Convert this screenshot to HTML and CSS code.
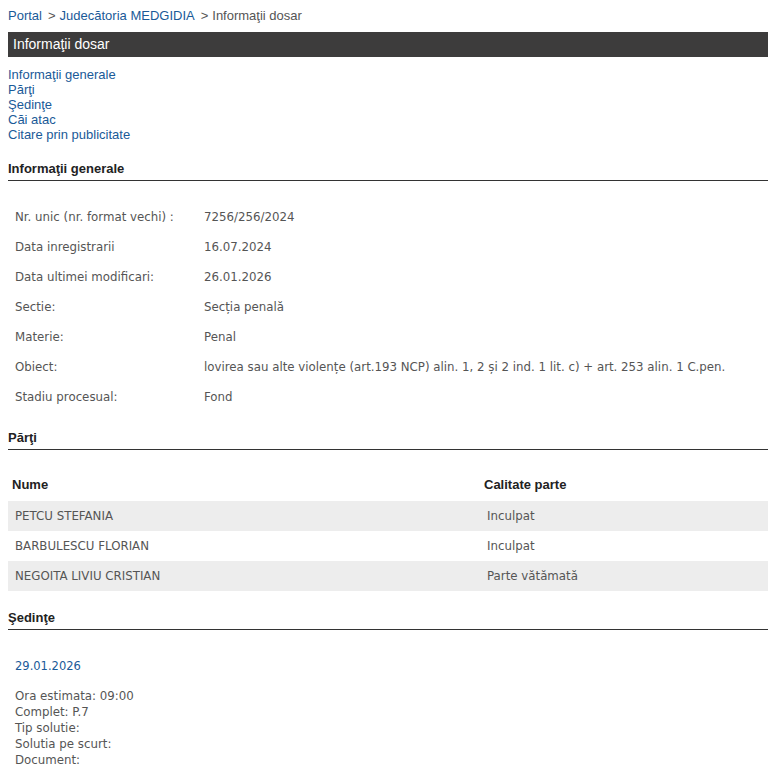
FILE: index.html
```html
<!DOCTYPE html>
<html lang="ro">
<head>
<meta charset="utf-8">
<title>Informaţii dosar</title>
<link rel="stylesheet" href="styles.css">
</head>
<body>
<div class="crumbs">
  <a href="#">Portal</a><span class="sep">&gt;</span><a href="#">Judecătoria MEDGIDIA</a><span class="sep">&gt;</span><span class="cur">Informaţii dosar</span>
</div>
<div class="bar">Informaţii dosar</div>
<nav class="toc">
  <a href="#">Informaţii generale</a>
  <a href="#">Părţi</a>
  <a href="#">Şedinţe</a>
  <a href="#">Căi atac</a>
  <a href="#">Citare prin publicitate</a>
</nav>

<h2 class="sect">Informaţii generale</h2>
<table class="info">
  <tr><td class="lbl">Nr. unic (nr. format vechi) :</td><td>7256/256/2024</td></tr>
  <tr><td class="lbl">Data inregistrarii</td><td>16.07.2024</td></tr>
  <tr><td class="lbl">Data ultimei modificari:</td><td>26.01.2026</td></tr>
  <tr><td class="lbl">Sectie:</td><td>Secția penală</td></tr>
  <tr><td class="lbl">Materie:</td><td>Penal</td></tr>
  <tr><td class="lbl">Obiect:</td><td>lovirea sau alte violențe (art.193 NCP) alin. 1, 2 și 2 ind. 1 lit. c) + art. 253 alin. 1 C.pen.</td></tr>
  <tr><td class="lbl">Stadiu procesual:</td><td>Fond</td></tr>
</table>

<h2 class="sect">Părţi</h2>
<table class="parti">
  <thead><tr><th class="c1">Nume</th><th>Calitate parte</th></tr></thead>
  <tbody>
    <tr class="odd"><td>PETCU STEFANIA</td><td>Inculpat</td></tr>
    <tr><td>BARBULESCU FLORIAN</td><td>Inculpat</td></tr>
    <tr class="odd"><td>NEGOITA LIVIU CRISTIAN</td><td>Parte vătămată</td></tr>
  </tbody>
</table>

<h2 class="sect">Şedinţe</h2>
<div class="sedinta">
  <div class="date">29.01.2026</div>
  <div class="lines">
    <div>Ora estimata: 09:00</div>
    <div>Complet: P.7</div>
    <div>Tip solutie:</div>
    <div>Solutia pe scurt:</div>
    <div>Document:</div>
  </div>
</div>
</body>
</html>
```

FILE: styles.css
```css
body {
  margin: 8px 9px 8px 8px;
  font-family: "Liberation Sans", Arial, sans-serif;
  font-size: 13px;
  color: #333;
  background: #fff;
}
a { color: #1a5a98; text-decoration: none; }

.crumbs {
  line-height: 15px;
  height: 15px;
  margin-bottom: 9px;
  color: #555;
}
.crumbs .sep { margin: 0 4px 0 6px; }
.crumbs .cur { color: #555; }

.bar {
  background: #3d3c3c;
  color: #fff;
  font-size: 14px;
  height: 25px;
  line-height: 24px;
  padding-left: 5px;
}

.toc {
  display: flex;
  flex-direction: column;
  align-items: flex-start;
  margin-top: 10px;
  line-height: 15px;
}

.sect {
  font-size: 13px;
  font-weight: bold;
  color: #222;
  margin: 19px 0 0;
  padding-bottom: 4px;
  line-height: 15px;
  border-bottom: 1px solid #333;
}
.info + .sect { margin-top: 18px; }

.info {
  border-collapse: collapse;
  margin-top: 21px;
  font-family: "DejaVu Sans", Verdana, sans-serif;
  font-size: 11.8px;
  color: #555;
}
.info td {
  height: 30px;
  padding: 0 0 0 7px;
  vertical-align: middle;
}
.info td.lbl { width: 182px; }

.parti {
  width: 100%;
  border-collapse: collapse;
  margin-top: 18px;
}
.parti th {
  text-align: left;
  font-weight: bold;
  color: #222;
  height: 33px;
  padding: 0 0 0 4px;
  vertical-align: middle;
}
.parti th.c1 { width: 468px; }
.parti td {
  height: 30px;
  padding: 0 0 0 7px;
  font-family: "DejaVu Sans", Verdana, sans-serif;
  font-size: 11.8px;
  color: #555;
  vertical-align: middle;
}
.parti tr.odd td { background: #ededed; }

.sedinta {
  padding-left: 7px;
  font-family: "DejaVu Sans", Verdana, sans-serif;
  font-size: 11.8px;
  color: #555;
}
.sedinta .date {
  color: #1a5a98;
  margin-top: 28px;
  line-height: 16px;
  font-size: 11.5px;
}
.sedinta .lines {
  margin-top: 14px;
  line-height: 16px;
}
```
